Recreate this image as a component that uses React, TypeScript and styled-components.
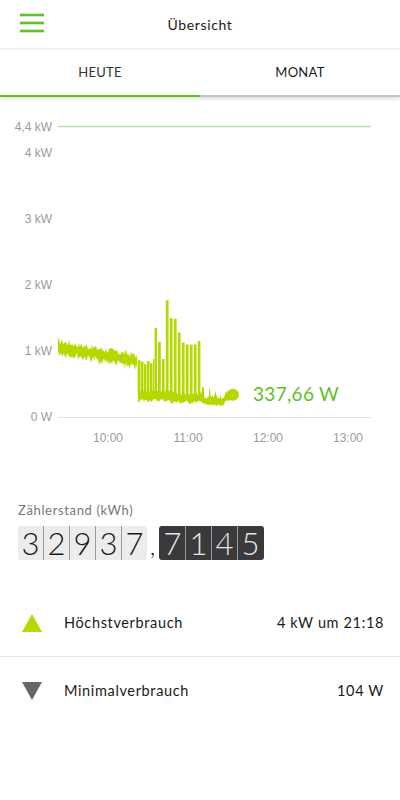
import React from 'react';
import styled, {createGlobalStyle} from 'styled-components';

const GREEN = '#5cc31f';
const LIME = '#b4d800';

const GlobalStyle = createGlobalStyle`
  html, body {
    margin: 0;
    padding: 0;
    background: #fff;
  }
  body {
    font-family: Lato, "Noto Sans", sans-serif;
    letter-spacing: 0.04em;
    color: #222;
  }
`;

// deterministic noise so the chart looks the same every run
const rand = (() => {
  let s = 17;
  return () => {
    s = (s * 9301 + 49297) % 233280;
    return s / 233280;
  };
})();

const Y0 = 417;
const PX_PER_KW = 66;
const ky = (kw: number) => Y0 - kw * PX_PER_KW;

type Spike = {x: number; w: number; top: number};

const spikes: Spike[] = [
  {x: 138, w: 2.5, top: 0.86},
  {x: 141, w: 2.5, top: 0.84},
  {x: 144, w: 2.5, top: 0.8},
  {x: 147, w: 2.5, top: 0.85},
  {x: 150, w: 2.5, top: 0.82},
  {x: 153, w: 1.2, top: 0.88},
  {x: 154.6, w: 2.4, top: 1.35},
  {x: 158, w: 2.8, top: 1.14},
  {x: 162, w: 2.6, top: 0.88},
  {x: 165.8, w: 2.8, top: 1.77},
  {x: 169.8, w: 2.8, top: 1.5},
  {x: 173.8, w: 2.8, top: 1.49},
  {x: 177.8, w: 2.8, top: 1.28},
  {x: 181.8, w: 2.8, top: 1.13},
  {x: 185.8, w: 2.8, top: 1.1},
  {x: 189.8, w: 2.8, top: 1.1},
  {x: 193.8, w: 2.8, top: 1.1},
  {x: 197.8, w: 2.6, top: 1.15},
  {x: 202, w: 2, top: 0.45},
];

const lowAt = (x: number) => {
  if (x < 138) return 1.1 - ((x - 58) / 80) * 0.22 - 0.07 - rand() * 0.12;
  if (x <= 205) return (x < 170 ? 0.28 : 0.25) - rand() * 0.06;
  const base = x < 222 ? 0.2 : 0.2 + ((x - 222) / 11) * 0.13;
  return base - rand() * 0.05;
};

const buildBand = () => {
  const upper: [number, number][] = [];
  for (let x = 58; x < 138; x += 1) {
    const base = 1.1 - ((x - 58) / 80) * 0.22;
    upper.push([x, base + rand() * 0.1]);
  }
  let cursor = 138;
  const floor = (x: number) => (x < 170 ? 0.36 : 0.33) + rand() * 0.06;
  spikes.forEach((sp) => {
    for (let x = cursor; x < sp.x; x += 1) upper.push([x, floor(x)]);
    const f = floor(sp.x);
    upper.push([sp.x, f], [sp.x, sp.top], [sp.x + sp.w, sp.top], [sp.x + sp.w, f]);
    cursor = sp.x + sp.w + 0.6;
  });
  for (let x = cursor; x <= 233; x += 1) {
    const base = x < 222 ? 0.22 : 0.22 + ((x - 222) / 11) * 0.11;
    upper.push([x, base + 0.05 + rand() * (Math.round(x) % 6 === 0 ? 0.2 : 0.08)]);
  }
  const lower: [number, number][] = [];
  for (let x = 58; x <= 233; x += 1) lower.push([x, lowAt(x)]);
  const pts = [...upper, ...lower.reverse()];
  return (
    pts.map(([x, kw], i) => `${i ? 'L' : 'M'}${x.toFixed(1)} ${ky(kw).toFixed(1)}`).join(' ') + ' Z'
  );
};

const bandPath = buildBand();

const yTicks = [
  {label: '4 kW', kw: 4},
  {label: '3 kW', kw: 3},
  {label: '2 kW', kw: 2},
  {label: '1 kW', kw: 1},
  {label: '0 W', kw: 0},
];

const xTicks = [
  {label: '10:00', x: 108},
  {label: '11:00', x: 188},
  {label: '12:00', x: 268},
  {label: '13:00', x: 348},
];

const PowerChart = () => (
  <ChartSvg width={400} height={358} viewBox="0 97 400 358">
    <line x1={58} x2={371} y1={ky(4.4)} y2={ky(4.4)} stroke="#b9e3a6" strokeWidth={1.5} />
    <AxisText x={52} y={ky(4.4) + 4} textAnchor="end">4,4 kW</AxisText>
    {yTicks.map((t) => (
      <AxisText key={t.label} x={52} y={ky(t.kw) + 4} textAnchor="end">
        {t.label}
      </AxisText>
    ))}
    <line x1={58} x2={371} y1={Y0 + 0.5} y2={Y0 + 0.5} stroke="#e2e2e2" strokeWidth={1} />
    {xTicks.map((t) => (
      <AxisText key={t.label} x={t.x} y={442} textAnchor="middle">
        {t.label}
      </AxisText>
    ))}
    <path d={bandPath} fill={LIME} />
    <circle cx={233} cy={ky(0.33766)} r={6} fill={LIME} />
    <ValueText x={253} y={ky(0.33766) + 6.5}>337,66 W</ValueText>
  </ChartSvg>
);

const Hamburger = () => (
  <svg width={26} height={20} viewBox="0 0 26 20">
    <g stroke={GREEN} strokeWidth={2.6}>
      <line x1={1} x2={25} y1={2} y2={2} />
      <line x1={1} x2={25} y1={10} y2={10} />
      <line x1={1} x2={25} y1={18} y2={18} />
    </g>
  </svg>
);

const Triangle = ({up, color}: {up: boolean; color: string}) => (
  <svg width={20} height={18} viewBox="0 0 20 18">
    <polygon points={up ? '10,0 20,18 0,18' : '0,0 20,0 10,18'} fill={color} />
  </svg>
);

const whole = ['3', '2', '9', '3', '7'];
const fraction = ['7', '1', '4', '5'];

export default function App() {
  return (
    <Page>
      <GlobalStyle />
      <Header>
        <MenuButton>
          <Hamburger />
        </MenuButton>
        <Title>Übersicht</Title>
      </Header>

      <Tabs>
        <Tab active>HEUTE</Tab>
        <Tab>MONAT</Tab>
      </Tabs>

      <PowerChart />

      <MeterSection>
        <MeterLabel>Zählerstand (kWh)</MeterLabel>
        <MeterRow>
          <DigitGroup>
            {whole.map((d, i) => (
              <Digit key={i}>{d}</Digit>
            ))}
          </DigitGroup>
          <Comma>,</Comma>
          <DigitGroup dark>
            {fraction.map((d, i) => (
              <Digit key={i} dark>
                {d}
              </Digit>
            ))}
          </DigitGroup>
        </MeterRow>
      </MeterSection>

      <StatList>
        <StatRow>
          <Triangle up color={LIME} />
          <StatName>Höchstverbrauch</StatName>
          <StatValue>4 kW um 21:18</StatValue>
        </StatRow>
        <StatRow>
          <Triangle up={false} color="#666" />
          <StatName>Minimalverbrauch</StatName>
          <StatValue>104 W</StatValue>
        </StatRow>
      </StatList>
    </Page>
  );
}

const Page = styled.div`
  width: 400px;
  min-height: 800px;
  background: #fff;
`;

const Header = styled.header`
  position: relative;
  height: 48px;
  display: flex;
  align-items: center;
  justify-content: center;
  border-bottom: 1px solid #eeeeee;
  box-shadow: 0 1px 2px rgba(0, 0, 0, 0.04);
`;

const MenuButton = styled.div`
  position: absolute;
  left: 19px;
  top: 13px;
  display: flex;
`;

const Title = styled.h1`
  margin: 0;
  font-size: 14px;
  font-weight: 400;
  color: #1a1a1a;
`;

const Tabs = styled.nav`
  display: flex;
  height: 48px;
  box-shadow: 0 2px 3px rgba(0, 0, 0, 0.12);
`;

const Tab = styled.div<{active?: boolean}>`
  flex: 1;
  display: flex;
  align-items: center;
  justify-content: center;
  font-size: 13px;
  letter-spacing: 0.3px;
  color: ${(p) => (p.active ? '#333' : '#1a1a1a')};
  border-bottom: 2px solid ${(p) => (p.active ? GREEN : '#c4c4c4')};
`;

const ChartSvg = styled.svg`
  display: block;
  letter-spacing: 0;
`;

const AxisText = styled.text`
  font-family: "Liberation Sans", Arial, sans-serif;
  font-size: 12px;
  fill: #9a9a9a;
`;

const ValueText = styled.text`
  font-family: Lato, "Noto Sans", sans-serif;
  font-size: 19px;
  letter-spacing: 0.3px;
  fill: ${GREEN};
`;

const MeterSection = styled.section`
  padding: 47px 18px 0;
`;

const MeterLabel = styled.div`
  font-size: 13px;
  color: #777;
  margin-bottom: 8px;
`;

const MeterRow = styled.div`
  display: flex;
  align-items: stretch;
`;

const DigitGroup = styled.div<{dark?: boolean}>`
  display: flex;
  gap: 1px;
  padding: ${(p) => (p.dark ? '0 1px' : '0')};
  border-radius: 3px;
  background: ${(p) => (p.dark ? '#3a3a3c' : '#ffffff')};
`;

const Digit = styled.div<{dark?: boolean}>`
  width: 25px;
  height: 34px;
  display: flex;
  align-items: center;
  justify-content: center;
  font-size: 31px;
  line-height: 34px;
  letter-spacing: 0;
  font-weight: 300;
  background: ${(p) => (p.dark ? '#3a3a3c' : '#ececec')};
  color: ${(p) => (p.dark ? '#e6e6e6' : '#1a1a1a')};
  & + & {
    box-shadow: -1px 0 0 ${(p) => (p.dark ? '#9a9a9a' : '#ffffff')};
  }
  &:first-child {
    border-radius: 3px 0 0 3px;
  }
  &:last-child {
    border-radius: 0 3px 3px 0;
  }
`;

const Comma = styled.div`
  width: 12px;
  display: flex;
  align-items: flex-end;
  justify-content: center;
  font-size: 26px;
  font-weight: 300;
  line-height: 30px;
`;

const StatList = styled.div`
  margin-top: 29px;
`;

const StatRow = styled.div`
  display: flex;
  align-items: center;
  height: 67px;
  padding: 0 16px 0 22px;
  & + & {
    border-top: 1px solid #e6e6e6;
  }
`;

const StatName = styled.span`
  margin-left: 22px;
  flex: 1;
  font-size: 14.5px;
  color: #1a1a1a;
`;

const StatValue = styled.span`
  font-size: 14.5px;
  color: #1a1a1a;
`;
